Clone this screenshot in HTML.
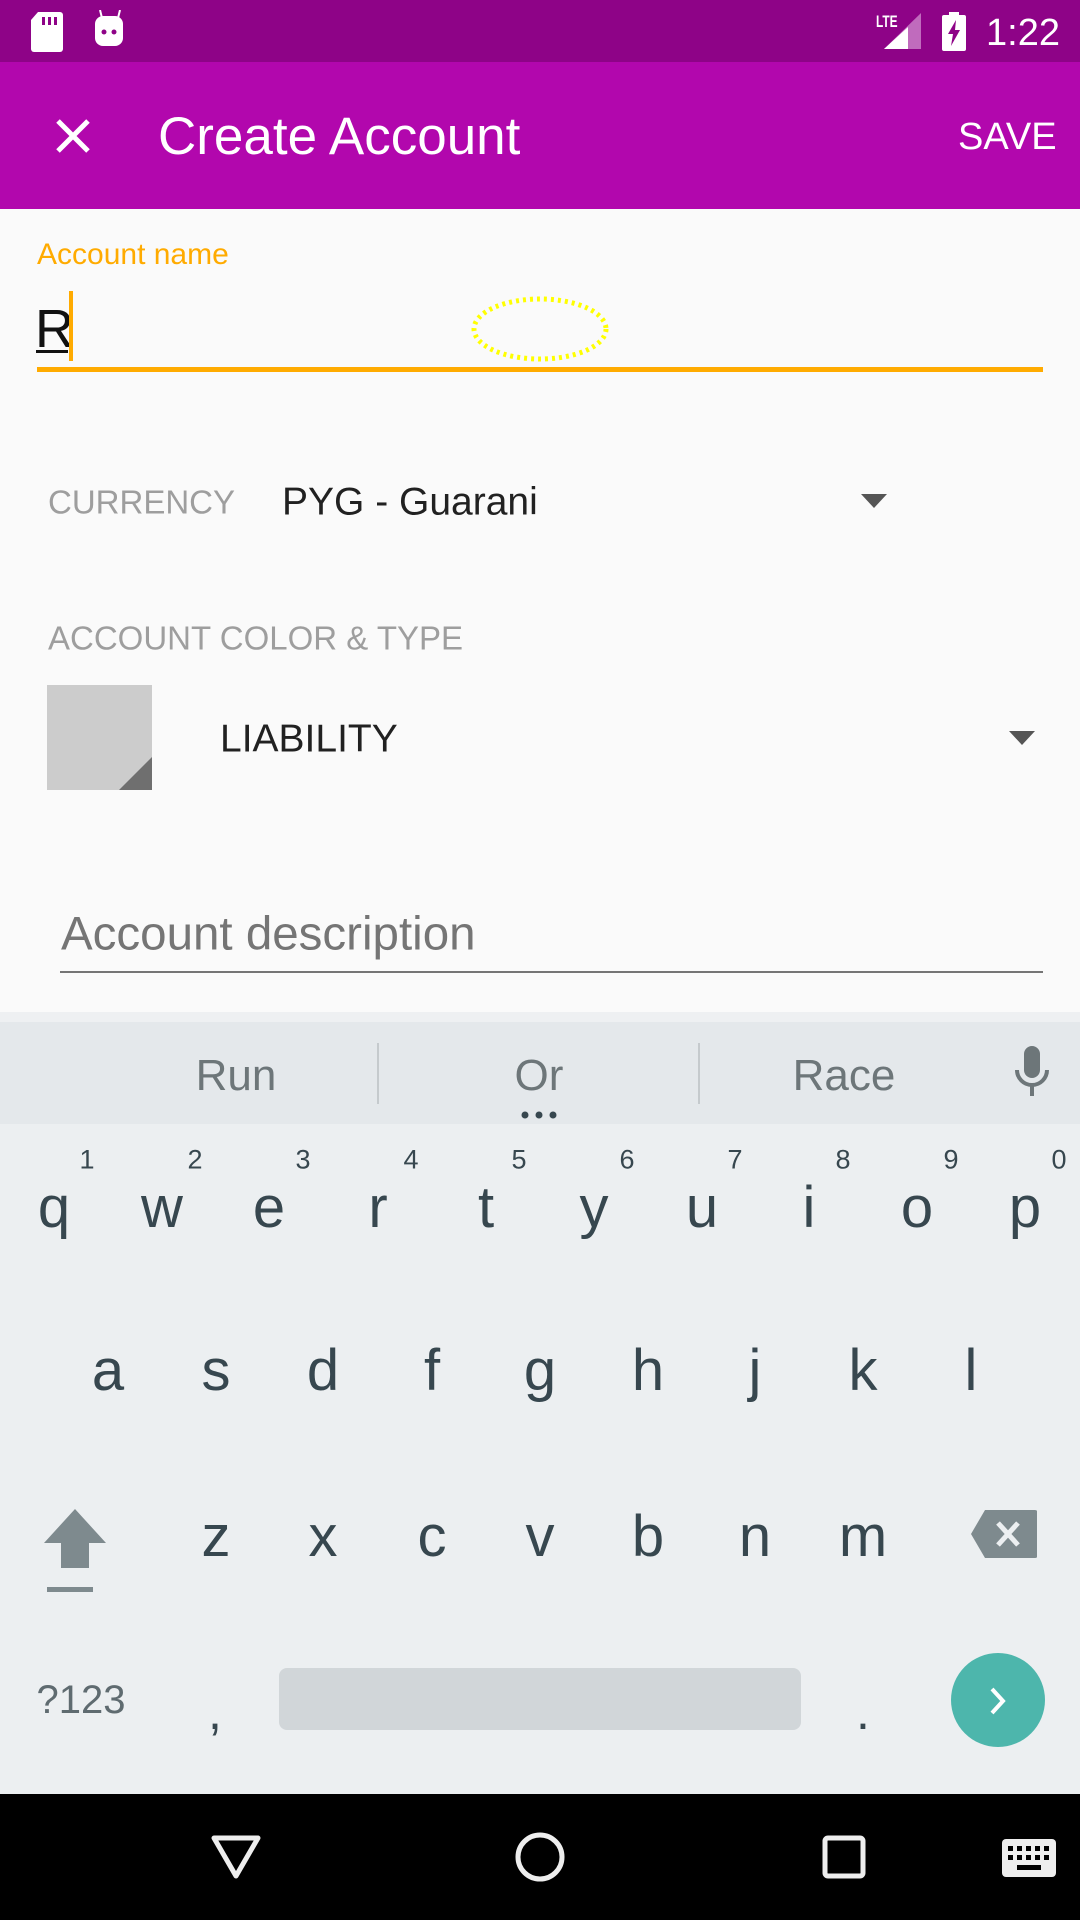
<!DOCTYPE html>
<html><head><meta charset="utf-8"><style>
*{margin:0;padding:0;box-sizing:border-box}
body{width:1080px;height:1920px;position:relative;overflow:hidden;background:#fafafa;font-family:"Liberation Sans",sans-serif}
.a{position:absolute;white-space:nowrap}
.c{position:absolute;white-space:nowrap;transform:translate(-50%,-50%);line-height:1}
.k{position:absolute;transform:translate(-50%,-50%);line-height:1;font-size:58px;color:#37474f}
.n{position:absolute;transform:translate(-50%,-50%);line-height:1;font-size:27px;color:#37474f}
</style></head><body>
<div class="a" style="left:0;top:0;width:1080px;height:62px;background:#8e0387"></div>
<svg class="a" style="left:30px;top:12px" width="36" height="40"><path d="M8 0h22a3 3 0 0 1 3 3v34a3 3 0 0 1-3 3H4a3 3 0 0 1-3-3V8z" fill="#fff"/><rect x="12" y="5" width="3" height="8" fill="#8e0387"/><rect x="18" y="5" width="3" height="8" fill="#8e0387"/><rect x="24" y="5" width="3" height="8" fill="#8e0387"/></svg>
<svg class="a" style="left:92px;top:10px" width="36" height="38"><line x1="8" y1="0" x2="10" y2="8" stroke="#fff" stroke-width="2"/><line x1="28" y1="0" x2="26" y2="8" stroke="#fff" stroke-width="2"/><rect x="3" y="6" width="28" height="30" rx="8" fill="#fff"/><circle cx="12" cy="22" r="2.5" fill="#8e0387"/><circle cx="22" cy="22" r="2.5" fill="#8e0387"/></svg>
<div class="a" style="left:876px;top:12px;font-size:17px;color:#fff;font-weight:bold;transform:scaleX(.7);transform-origin:left">LTE</div>
<svg class="a" style="left:884px;top:13px" width="40" height="37"><polygon points="37,0 37,36 0,36" fill="#c06bbd"/><polygon points="24,14 24,36 0,36" fill="#fff"/></svg>
<svg class="a" style="left:942px;top:12px" width="26" height="40"><rect x="7" y="0" width="10" height="4" fill="#fff"/><rect x="0" y="3" width="24" height="36" rx="2" fill="#fff"/><path d="M14 8 L6 22 L11 22 L9 34 L18 18 L13 18 Z" fill="#8e0387"/></svg>
<div class="a" style="left:986px;top:12px;font-size:38px;color:#fff">1:22</div>
<div class="a" style="left:0;top:62px;width:1080px;height:147px;background:#b207ad"></div>
<svg class="a" style="left:55px;top:118px" width="36" height="36"><path d="M3 3L33 33M33 3L3 33" stroke="#fff" stroke-width="5"/></svg>
<div class="a" style="left:158px;top:106px;font-size:53px;color:#fff;font-weight:500">Create Account</div>
<div class="a" style="left:958px;top:116px;font-size:38px;color:#fff">SAVE</div>
<div class="a" style="left:37px;top:238px;font-size:30px;color:#ffab00">Account name</div>
<div class="a" style="left:35px;top:302px;font-size:54px;color:#111;line-height:1">R</div>
<div class="a" style="left:36px;top:350px;width:32px;height:3px;background:#111"></div>
<div class="a" style="left:69px;top:291px;width:4px;height:70px;background:#ffab00"></div>
<div class="a" style="left:37px;top:367px;width:1006px;height:5px;background:#ffab00"></div>
<svg class="a" style="left:468px;top:294px" width="144" height="70"><ellipse cx="72" cy="35" rx="66" ry="30" fill="none" stroke="#ffff00" stroke-width="5" stroke-dasharray="3 4"/></svg>
<div class="c" style="left:48px;top:502px;transform:translateY(-50%);font-size:33px;color:#9e9e9e">CURRENCY</div>
<div class="c" style="left:282px;top:502px;transform:translateY(-50%);font-size:39px;color:#212121">PYG - Guarani</div>
<svg class="a" style="left:861px;top:494px" width="26" height="14"><polygon points="0,0 26,0 13,14" fill="#555"/></svg>
<div class="c" style="left:48px;top:638px;transform:translateY(-50%);font-size:33px;color:#9e9e9e">ACCOUNT COLOR &amp; TYPE</div>
<div class="a" style="left:47px;top:685px;width:105px;height:105px;background:#cccccc"></div>
<svg class="a" style="left:119px;top:757px" width="33" height="33"><polygon points="33,0 33,33 0,33" fill="#6f6f6f"/></svg>
<div class="c" style="left:220px;top:739px;transform:translateY(-50%);font-size:39px;color:#212121">LIABILITY</div>
<svg class="a" style="left:1009px;top:731px" width="26" height="14"><polygon points="0,0 26,0 13,14" fill="#555"/></svg>
<div class="c" style="left:61px;top:934px;transform:translateY(-50%);font-size:47.5px;color:#757575">Account description</div>
<div class="a" style="left:60px;top:971px;width:983px;height:2px;background:#757575"></div>
<div class="a" style="left:0;top:1012px;width:1080px;height:12px;background:#eef0f2"></div>
<div class="a" style="left:0;top:1022px;width:1080px;height:102px;background:#e4e8eb"></div>
<div class="a" style="left:0;top:1124px;width:1080px;height:670px;background:#eceff1"></div>
<div class="c" style="left:236px;top:1076px;font-size:44px;color:#6d7679">Run</div>
<div class="c" style="left:539px;top:1076px;font-size:44px;color:#6d7679">Or</div>
<div class="c" style="left:844px;top:1076px;font-size:44px;color:#6d7679">Race</div>
<div class="a" style="left:377px;top:1043px;width:2px;height:61px;background:#c5cacd"></div>
<div class="a" style="left:698px;top:1043px;width:2px;height:61px;background:#c5cacd"></div>
<svg class="a" style="left:519px;top:1110px" width="40" height="10"><circle cx="6" cy="5" r="3.5" fill="#37474f"/><circle cx="20" cy="5" r="3.5" fill="#37474f"/><circle cx="34" cy="5" r="3.5" fill="#37474f"/></svg>
<svg class="a" style="left:1012px;top:1046px" width="40" height="56"><rect x="12" y="0" width="16" height="32" rx="8" fill="#6d7679"/><path d="M5 24a15 15 0 0 0 30 0" fill="none" stroke="#6d7679" stroke-width="4"/><rect x="18" y="38" width="4" height="12" fill="#6d7679"/></svg>
<div class="k" style="left:54px;top:1208px">q</div><div class="n" style="left:87px;top:1160px">1</div>
<div class="k" style="left:162px;top:1208px">w</div><div class="n" style="left:195px;top:1160px">2</div>
<div class="k" style="left:269px;top:1208px">e</div><div class="n" style="left:303px;top:1160px">3</div>
<div class="k" style="left:378px;top:1208px">r</div><div class="n" style="left:411px;top:1160px">4</div>
<div class="k" style="left:486px;top:1208px">t</div><div class="n" style="left:519px;top:1160px">5</div>
<div class="k" style="left:594px;top:1208px">y</div><div class="n" style="left:627px;top:1160px">6</div>
<div class="k" style="left:702px;top:1208px">u</div><div class="n" style="left:735px;top:1160px">7</div>
<div class="k" style="left:809px;top:1208px">i</div><div class="n" style="left:843px;top:1160px">8</div>
<div class="k" style="left:917px;top:1208px">o</div><div class="n" style="left:951px;top:1160px">9</div>
<div class="k" style="left:1025px;top:1208px">p</div><div class="n" style="left:1059px;top:1160px">0</div>
<div class="k" style="left:108px;top:1371px">a</div>
<div class="k" style="left:216px;top:1371px">s</div>
<div class="k" style="left:323px;top:1371px">d</div>
<div class="k" style="left:432px;top:1371px">f</div>
<div class="k" style="left:540px;top:1371px">g</div>
<div class="k" style="left:648px;top:1371px">h</div>
<div class="k" style="left:755px;top:1371px">j</div>
<div class="k" style="left:863px;top:1371px">k</div>
<div class="k" style="left:971px;top:1371px">l</div>
<svg class="a" style="left:43px;top:1509px" width="66" height="85"><polygon points="32,0 63,34 46,34 46,59 18,59 18,34 1,34" fill="#7e8a8e"/><rect x="4" y="78" width="46" height="5" fill="#7e8a8e"/></svg>
<div class="k" style="left:216px;top:1537px">z</div>
<div class="k" style="left:323px;top:1537px">x</div>
<div class="k" style="left:432px;top:1537px">c</div>
<div class="k" style="left:540px;top:1537px">v</div>
<div class="k" style="left:648px;top:1537px">b</div>
<div class="k" style="left:755px;top:1537px">n</div>
<div class="k" style="left:863px;top:1537px">m</div>
<svg class="a" style="left:971px;top:1510px" width="66" height="50"><path d="M14 0H64a3 3 0 0 1 3 3V45a3 3 0 0 1-3 3H14L0 24Z" fill="#7e8a8e"/><path d="M27 13L47 35M47 13L27 35" stroke="#eceff1" stroke-width="5"/></svg>
<div class="c" style="left:81px;top:1700px;font-size:40px;color:#5f6b70">?123</div>
<div class="c" style="left:215px;top:1712px;font-size:50px;color:#37474f">,</div>
<div class="a" style="left:279px;top:1668px;width:522px;height:62px;background:#d1d6d9;border-radius:8px"></div>
<div class="c" style="left:863px;top:1712px;font-size:50px;color:#37474f">.</div>
<div class="a" style="left:951px;top:1653px;width:94px;height:94px;border-radius:50%;background:#4db6ac"></div>
<svg class="a" style="left:987px;top:1686px" width="22" height="30"><path d="M5 3L16 15L5 27" fill="none" stroke="#fff" stroke-width="4"/></svg>
<div class="a" style="left:0;top:1794px;width:1080px;height:126px;background:#000"></div>
<svg class="a" style="left:210px;top:1834px" width="52" height="46"><path d="M4 4H48L26 42Z" fill="none" stroke="#eee" stroke-width="5" stroke-linejoin="round"/></svg>
<svg class="a" style="left:514px;top:1831px" width="52" height="52"><circle cx="26" cy="26" r="22" fill="none" stroke="#eee" stroke-width="5"/></svg>
<svg class="a" style="left:822px;top:1835px" width="44" height="44"><rect x="3" y="3" width="38" height="38" rx="3" fill="none" stroke="#eee" stroke-width="5"/></svg>
<svg class="a" style="left:1002px;top:1839px" width="54" height="38"><rect width="54" height="38" rx="4" fill="#eee"/><g fill="#000"><rect x="6" y="7" width="5" height="5"/><rect x="15" y="7" width="5" height="5"/><rect x="24" y="7" width="5" height="5"/><rect x="33" y="7" width="5" height="5"/><rect x="42" y="7" width="5" height="5"/><rect x="6" y="16" width="5" height="5"/><rect x="15" y="16" width="5" height="5"/><rect x="24" y="16" width="5" height="5"/><rect x="33" y="16" width="5" height="5"/><rect x="42" y="16" width="5" height="5"/><rect x="15" y="26" width="24" height="5"/></g></svg>
</body></html>
